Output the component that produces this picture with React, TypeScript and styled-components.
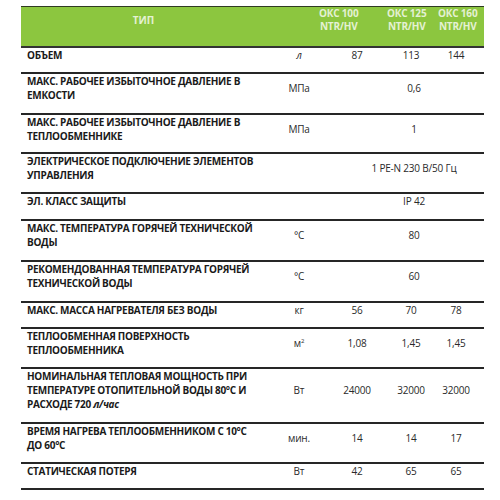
import React from 'react';
import styled, { createGlobalStyle } from 'styled-components';

const GlobalStyle = createGlobalStyle`
  html, body {
    margin: 0;
    padding: 0;
    background: #ffffff;
  }
  body {
    font-family: "Open Sans", "Noto Sans", Arial, sans-serif;
    color: #1a1a1a;
  }
`;

const Page = styled.div`
  width: 500px;
  height: 500px;
  padding: 6px 0 0 21px;
  box-sizing: border-box;
  overflow: hidden;
`;

const Table = styled.div`
  width: 463px;
  display: flex;
  flex-direction: column;
`;

const HeaderRow = styled.div`
  display: grid;
  grid-template-columns: 245px 53px 68px 51px 46px;
  align-items: center;
  align-content: start;
  height: 42px;
  padding-top: 0;
  background: #8cc63f;
  border-top: 1px solid #2f3a22;
  border-bottom: 2px solid #333;
  box-sizing: border-box;
`;

const TypeLabel = styled.div`
  grid-column: 1;
  text-align: center;
  font-size: 10px;
  font-weight: 700;
  color: #e4f1d3;
`;

const ModelLabel = styled.div<{ $col: number }>`
  grid-column: ${(p) => p.$col};
  justify-self: start;
  text-align: center;
  font-size: 10px;
  line-height: 13px;
  font-weight: 700;
  letter-spacing: -0.2px;
  color: #e4f1d3;
  white-space: nowrap;
`;

const Row = styled.div<{ $h: number }>`
  height: ${(p) => p.$h}px;
  border-bottom: 2px solid #262626;
  box-sizing: border-box;
  padding-top: 0;
`;

const RowContent = styled.div`
  display: grid;
  grid-template-columns: 249px 58px 58px 50px 40px;
  align-items: center;
`;

const Name = styled.div`
  padding-left: 6px;
  font-size: 10px;
  line-height: 14px;
  font-weight: 700;
  letter-spacing: -0.3px;
  color: #1a1a1a;
  white-space: nowrap;
`;

const Unit = styled.div`
  text-align: center;
  font-size: 10px;
  line-height: 14px;
  letter-spacing: -0.2px;
  color: #2a2a2a;
  white-space: nowrap;
`;

const Value = styled.div<{ $span?: boolean }>`
  grid-column: ${(p) => (p.$span ? '3 / 6' : 'auto')};
  text-align: center;
  padding-left: ${(p) => (p.$span ? '24px' : '0')};
  font-size: 10px;
  line-height: 14px;
  letter-spacing: -0.2px;
  color: #2a2a2a;
  white-space: nowrap;
`;

const Sup = styled.sup`
  font-size: 6px;
  line-height: 0;
`;

type Spec = {
  lines: React.ReactNode[];
  unit: React.ReactNode;
  values: string[];
  h: number;
};

const specs: Spec[] = [
  { lines: ['ОБЪЕМ'], unit: <i>л</i>, values: ['87', '113', '144'], h: 26 },
  { lines: ['МАКС. РАБОЧЕЕ ИЗБЫТОЧНОЕ ДАВЛЕНИЕ В', 'ЕМКОСТИ'], unit: 'МПа', values: ['0,6'], h: 41 },
  { lines: ['МАКС. РАБОЧЕЕ ИЗБЫТОЧНОЕ ДАВЛЕНИЕ В', 'ТЕПЛООБМЕННИКЕ'], unit: 'МПа', values: ['1'], h: 39 },
  { lines: ['ЭЛЕКТРИЧЕСКОЕ ПОДКЛЮЧЕНИЕ ЭЛЕМЕНТОВ', 'УПРАВЛЕНИЯ'], unit: '', values: ['1 PE-N 230 В/50 Гц'], h: 40 },
  { lines: ['ЭЛ. КЛАСС ЗАЩИТЫ'], unit: '', values: ['IP 42'], h: 27 },
  { lines: ['МАКС. ТЕМПЕРАТУРА ГОРЯЧЕЙ ТЕХНИЧЕСКОЙ', 'ВОДЫ'], unit: '°C', values: ['80'], h: 41 },
  { lines: ['РЕКОМЕНДОВАННАЯ ТЕМПЕРАТУРА ГОРЯЧЕЙ', 'ТЕХНИЧЕСКОЙ ВОДЫ'], unit: '°C', values: ['60'], h: 41 },
  { lines: ['МАКС. МАССА НАГРЕВАТЕЛЯ БЕЗ ВОДЫ'], unit: 'кг', values: ['56', '70', '78'], h: 26 },
  {
    lines: ['ТЕПЛООБМЕННАЯ ПОВЕРХНОСТЬ', 'ТЕПЛООБМЕННИКА'],
    unit: <>м<Sup>2</Sup></>,
    values: ['1,08', '1,45', '1,45'],
    h: 40,
  },
  {
    lines: [
      'НОМИНАЛЬНАЯ ТЕПЛОВАЯ МОЩНОСТЬ ПРИ',
      'ТЕМПЕРАТУРЕ ОТОПИТЕЛЬНОЙ ВОДЫ 80°C И',
      <>РАСХОДЕ 720 <i>л/час</i></>,
    ],
    unit: 'Вт',
    values: ['24000', '32000', '32000'],
    h: 55,
  },
  { lines: ['ВРЕМЯ НАГРЕВА ТЕПЛООБМЕННИКОМ С 10°C', 'ДО 60°C'], unit: 'мин.', values: ['14', '14', '17'], h: 40 },
  { lines: ['СТАТИЧЕСКАЯ ПОТЕРЯ'], unit: 'Вт', values: ['42', '65', '65'], h: 26 },
];

const models = ['ОКС 100', 'ОКС 125', 'ОКС 160'];

export default function App() {
  return (
    <>
      <GlobalStyle />
      <Page>
        <Table>
          <HeaderRow>
            <TypeLabel>ТИП</TypeLabel>
            {models.map((m, i) => (
              <ModelLabel key={m} $col={i + 3}>
                {m}
                <br />
                NTR/HV
              </ModelLabel>
            ))}
          </HeaderRow>
          {specs.map((s, i) => (
            <Row key={i} $h={s.h}>
              <RowContent>
                <Name>
                  {s.lines.map((l, k) => (
                    <div key={k}>{l}</div>
                  ))}
                </Name>
                <Unit>{s.unit}</Unit>
                {s.values.length === 1 ? (
                  <Value $span>{s.values[0]}</Value>
                ) : (
                  s.values.map((v, j) => <Value key={j}>{v}</Value>)
                )}
              </RowContent>
            </Row>
          ))}
        </Table>
      </Page>
    </>
  );
}
